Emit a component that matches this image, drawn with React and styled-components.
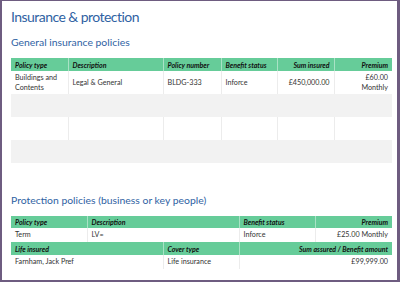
import React from 'react';
import styled, { createGlobalStyle } from 'styled-components';

const GlobalStyle = createGlobalStyle`
  html, body {
    margin: 0;
    padding: 0;
    background: #ffffff;
  }
  body {
    font-family: "Lato", "Open Sans", sans-serif;
  }
`;

const Frame = styled.div`
  box-sizing: border-box;
  width: 400px;
  height: 282px;
  border-style: solid;
  border-color: #6e5c80;
  border-width: 1px 3px 2px 2px;
  padding: 5px 5px 0 9px;
  overflow: hidden;
  background: #fff;
`;

const Title = styled.h1`
  margin: 0;
  font-size: 14px;
  font-weight: 400;
  letter-spacing: -0.55px;
  line-height: 22px;
  color: #2f62a3;
`;

const SectionTitle = styled.h2`
  margin: ${({ $top }) => $top || 0}px 0 0 0;
  font-size: 10.4px;
  font-weight: 400;
  line-height: 16px;
  color: #2f62a3;
`;

const Table = styled.table`
  width: 381px;
  border-collapse: collapse;
  table-layout: fixed;
  margin-top: ${({ $top }) => $top || 0}px;
`;

const HeadCell = styled.th`
  height: ${({ $h }) => $h || 13}px;
  padding: 0 4px;
  background: #66cc99;
  border-left: 1px solid #a9e2c5;
  font-size: 7px;
  font-weight: 700;
  font-style: italic;
  color: #111;
  text-align: ${({ $right }) => ($right ? 'right' : 'left')};
  white-space: nowrap;
  overflow: hidden;
  &:first-child {
    border-left: none;
  }
`;

const Row = styled.tr`
  background: ${({ $grey }) => ($grey ? '#f2f2f2' : '#ffffff')};
`;

const Cell = styled.td`
  height: ${({ $h }) => $h || 23}px;
  padding: 0 4px;
  border-left: 1px solid ${({ $grey }) => ($grey ? '#f2f2f2' : '#ececec')};
  font-size: 7.2px;
  line-height: 10px;
  color: #333;
  text-align: ${({ $right }) => ($right ? 'right' : 'left')};
  vertical-align: middle;
  &:first-child {
    border-left: none;
  }
`;

const generalCols = [57, 95, 58, 56, 57, 58];
const generalHead = [
  ['Policy type'],
  ['Description'],
  ['Policy number'],
  ['Benefit status'],
  ['Sum insured', true],
  ['Premium', true],
];

const Cols = ({ widths }) => (
  <colgroup>
    {widths.map((w, i) => (
      <col key={i} style={{ width: w }} />
    ))}
  </colgroup>
);

const App = () => {
  const emptyRows = [true, false, true];
  return (
    <>
      <GlobalStyle />
      <Frame>
        <Title>Insurance &amp; protection</Title>
        <SectionTitle $top={6}>General insurance policies</SectionTitle>
        <Table $top={8}>
          <Cols widths={generalCols} />
          <thead>
            <tr>
              {generalHead.map(([t, r]) => (
                <HeadCell key={t} $right={r}>{t}</HeadCell>
              ))}
            </tr>
          </thead>
          <tbody>
            <Row>
              <Cell>Buildings and<br />Contents</Cell>
              <Cell>Legal &amp; General</Cell>
              <Cell>BLDG-333</Cell>
              <Cell>Inforce</Cell>
              <Cell $right>£450,000.00</Cell>
              <Cell $right>£60.00<br />Monthly</Cell>
            </Row>
            {emptyRows.map((g, i) => (
              <Row key={i} $grey={g}>
                {generalCols.map((_, j) => (
                  <Cell key={j} $grey={g} />
                ))}
              </Row>
            ))}
          </tbody>
        </Table>

        <SectionTitle $top={29}>Protection policies (business or key people)</SectionTitle>
        <Table $top={8}>
          <Cols widths={[76, 152, 76, 77]} />
          <thead>
            <tr>
              <HeadCell $h={12}>Policy type</HeadCell>
              <HeadCell $h={12}>Description</HeadCell>
              <HeadCell $h={12}>Benefit status</HeadCell>
              <HeadCell $h={12} $right>Premium</HeadCell>
            </tr>
          </thead>
          <tbody>
            <Row>
              <Cell $h={14}>Term</Cell>
              <Cell $h={14}>LV=</Cell>
              <Cell $h={14}>Inforce</Cell>
              <Cell $h={14} $right>£25.00 Monthly</Cell>
            </Row>
          </tbody>
        </Table>
        <Table>
          <Cols widths={[152, 76, 153]} />
          <thead>
            <tr>
              <HeadCell>Life insured</HeadCell>
              <HeadCell>Cover type</HeadCell>
              <HeadCell $right>Sum assured / Benefit amount</HeadCell>
            </tr>
          </thead>
          <tbody>
            <Row>
              <Cell $h={14}>Farnham, Jack Pref</Cell>
              <Cell $h={14}>Life insurance</Cell>
              <Cell $h={14} $right>£99,999.00</Cell>
            </Row>
          </tbody>
        </Table>
      </Frame>
    </>
  );
};

export default App;
